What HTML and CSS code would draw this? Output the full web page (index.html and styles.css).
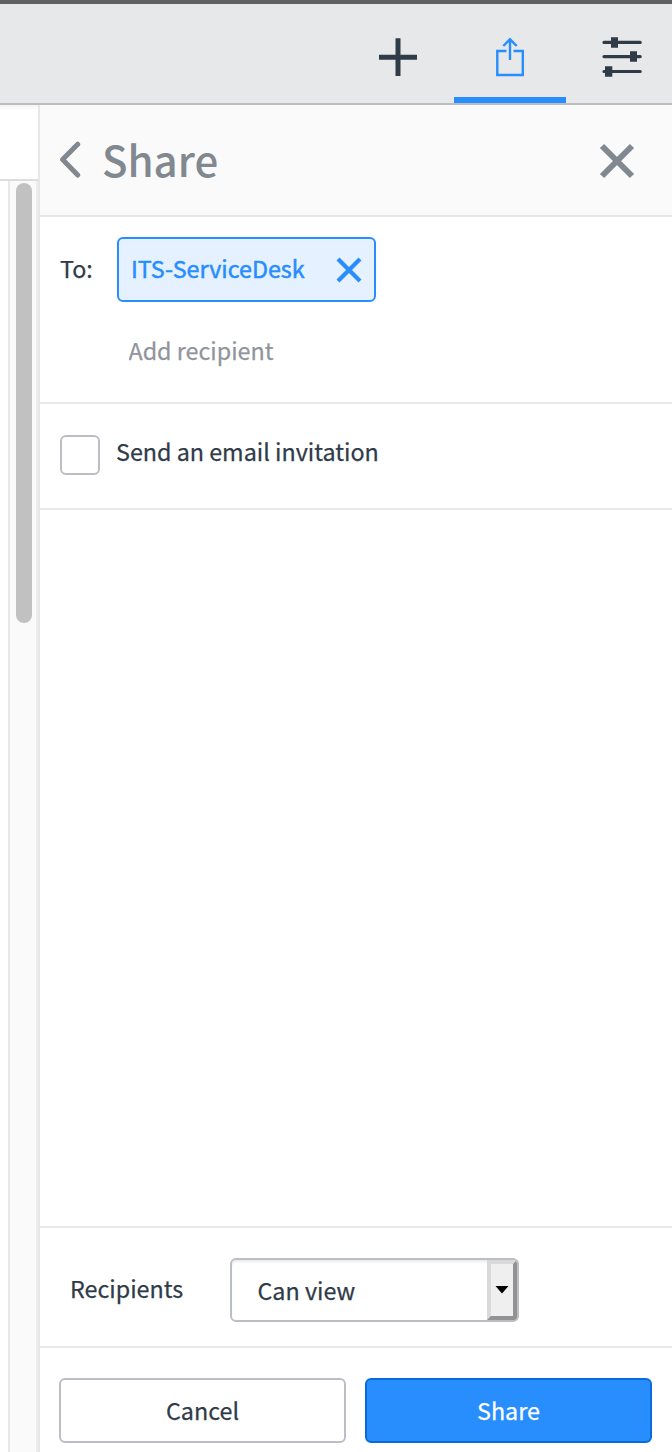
FILE: index.html
```html
<!DOCTYPE html>
<html lang="en">
<head>
    <meta charset="UTF-8">
    <meta name="viewport" content="width=device-width, initial-scale=1.0">
    <title>Share</title>
    <link rel="stylesheet" href="styles.css">
</head>
<body>

<header class="toolbar">
    <button class="tool" aria-label="Add">
        <svg width="112" height="99" viewBox="0 0 112 99" fill="none" stroke="#303b48" stroke-width="5">
            <path d="M37 53.3H75M56 34.3V72"/>
        </svg>
    </button>
    <button class="tool active" aria-label="Share">
        <svg width="112" height="99" viewBox="0 0 112 99" fill="none" stroke="#288dfd" stroke-width="2.4">
            <path d="M52.5 47H43.3V71H68.8V47H59.5"/>
            <path d="M56 56V36M49.3 42L56 35.3L62.7 42"/>
        </svg>
    </button>
    <button class="tool" aria-label="Settings">
        <svg width="112" height="99" viewBox="0 0 112 99" fill="#303b48" stroke="#303b48" stroke-width="3.2" stroke-linecap="round">
            <path d="M38 38.4H74.2M38 52.6H74.2M38 67.5H74.2"/>
            <path stroke="none" d="M45 33.2h7v10.6h-7zM64 47.2h7v10.6h-7zM39 62.2h7.3v10.6h-7.3z"/>
        </svg>
    </button>
</header>

<div class="main">
    <div class="document">
        <div class="document-top"></div>
        <div class="scrollbar">
            <div class="thumb"></div>
        </div>
    </div>

    <div class="panel">
        <div class="panel-header">
            <svg class="back" width="22" height="38" viewBox="0 0 22 38" fill="none" stroke="#818890" stroke-width="5" stroke-linecap="round" stroke-linejoin="round">
                <path d="M18.7 3.2L3.6 18.6L18.7 34"/>
            </svg>
            <h1>Share</h1>
            <svg class="close" width="36" height="36" viewBox="0 0 36 36" stroke="#818890" stroke-width="6">
                <path d="M3 3L33 33M33 3L3 33"/>
            </svg>
        </div>

        <div class="recipients">
            <span class="to-label">To:</span>
            <div class="recipient-list">
                <div class="chip">
                    <span>ITS-ServiceDesk</span>
                    <svg width="26" height="26" viewBox="0 0 26 26" stroke="#288dfd" stroke-width="4.2">
                        <path d="M2 2L24 24M24 2L2 24"/>
                    </svg>
                </div>
                <input class="add-recipient" type="text" placeholder="Add recipient">
            </div>
        </div>

        <label class="invite">
            <input type="checkbox">
            <span>Send an email invitation</span>
        </label>

        <div class="spacer"></div>

        <div class="permission">
            <span class="permission-label">Recipients</span>
            <div class="select">
                <span>Can view</span>
                <div class="select-btn">
                    <svg width="14" height="8" viewBox="0 0 14 8"><path d="M0.5 0H13.5L7 7.4Z"/></svg>
                </div>
            </div>
        </div>

        <div class="actions">
            <button class="btn">Cancel</button>
            <button class="btn primary">Share</button>
        </div>
    </div>
</div>

</body>
</html>
```
FILE: styles.css
```css
* {
    box-sizing: border-box;
}

body {
    margin: 0;
    height: 1452px;
    display: flex;
    flex-direction: column;
    overflow: hidden;
    background: #fff;
    color: #303b48;
    font-family: "Noto Sans CJK JP", "Noto Sans", sans-serif;
    font-size: 23.3px;
    line-height: 34px;
    -webkit-text-stroke: 0.25px;
}

button,
input {
    font: inherit;
    color: inherit;
}

svg {
    display: block;
    flex: none;
}

.toolbar {
    height: 105px;
    flex: none;
    display: flex;
    justify-content: flex-end;
    background: #e6e8ea;
    border-top: 4px solid #616163;
    border-bottom: 2px solid #bbbdc0;
}

.tool {
    width: 112px;
    height: 99px;
    flex: none;
    padding: 0;
    border: 0;
    background: none;
}

.tool:last-child {
    width: 106px;
    overflow: hidden;
}

.tool.active {
    box-shadow: inset 0 -6px #288dfd;
}

.main {
    flex: 1;
    display: flex;
}

.document {
    width: 40px;
    display: flex;
    flex-direction: column;
    border-right: 2px solid #e6e7e8;
}

.document-top {
    height: 76px;
    border-bottom: 2px solid #dcddde;
    background: linear-gradient(#f4f4f5, #fff 6px);
}

.scrollbar {
    flex: 1;
    margin-left: 8px;
    padding: 2px 4px 0 6px;
    background: #fafafa;
    border-left: 2px solid #e8e8e8;
    border-right: 2px solid #ededed;
}

.thumb {
    width: 16px;
    height: 440px;
    border-radius: 8px;
    background: #c1c1c1;
}

.panel {
    flex: 1;
    display: flex;
    flex-direction: column;
}

.panel-header {
    height: 112px;
    display: flex;
    align-items: center;
    padding: 0 37px 0 19px;
    background: #fafafa;
    border-bottom: 2px solid #e6e7e8;
}

.panel-header h1 {
    flex: 1;
    margin: 0 0 3px 21px;
    color: #818890;
    font-size: 42px;
    font-weight: 500;
    line-height: 60px;
    -webkit-text-stroke: 0;
}

.close {
    margin-top: 2px;
}

.recipients {
    height: 187px;
    display: flex;
    padding: 20px 20px 0;
    border-bottom: 2px solid #e6e7e8;
}

.to-label {
    width: 57px;
    padding-top: 14px;
}

.chip {
    width: 259px;
    height: 65px;
    display: flex;
    align-items: center;
    justify-content: space-between;
    padding: 0 12px;
    border: 2px solid #288dfd;
    border-radius: 6px;
    background: #e5f1fe;
    color: #288dfd;
    -webkit-text-stroke: 0.5px;
}

.chip span {
    margin-bottom: 3px;
}

.add-recipient {
    display: block;
    width: 259px;
    height: 34px;
    margin-top: 31px;
    padding: 0 11.5px;
    border: 0;
    outline: none;
}

.add-recipient::placeholder {
    color: #90959b;
    opacity: 1;
}

.invite {
    height: 106px;
    display: flex;
    padding: 30px 20px 0;
    border-bottom: 2px solid #e6e7e8;
}

.invite input {
    appearance: none;
    width: 40px;
    height: 40px;
    margin: 1px 16px 0 0;
    border: 2px solid #bbbfc4;
    border-radius: 6px;
    background: #fff;
}

.spacer {
    flex: 1;
}

.permission {
    height: 122px;
    display: flex;
    align-items: flex-start;
    padding: 30px 0 0 30px;
    border-top: 2px solid #e6e7e8;
    border-bottom: 2px solid #e6e7e8;
}

.permission-label {
    width: 160px;
    margin-top: 13px;
}

.select {
    width: 289px;
    height: 64px;
    display: flex;
    align-items: center;
    justify-content: space-between;
    padding-left: 25.5px;
    border: 2px solid #bbbfc4;
    border-radius: 6px;
    box-shadow: inset 0 3px 3px -1px #eaebec;
    overflow: hidden;
}

.select-btn {
    width: 30px;
    height: 60px;
    display: flex;
    align-items: center;
    justify-content: center;
    border: 4px solid;
    border-color: #d9d9d9 #929292 #929292 #d9d9d9;
    background: #efefef;
}

.actions {
    height: 104px;
    display: flex;
    gap: 19px;
    padding: 30px 20px 0 19px;
}

.btn {
    flex: 1;
    height: 65px;
    padding: 0 0 2px;
    border: 2px solid #bbbfc4;
    border-radius: 6px;
    background: #fff;
    -webkit-text-stroke: 0.25px;
}

.btn.primary {
    border-color: #0a6cda;
    background: #288dfd;
    color: #fff;
}
```
